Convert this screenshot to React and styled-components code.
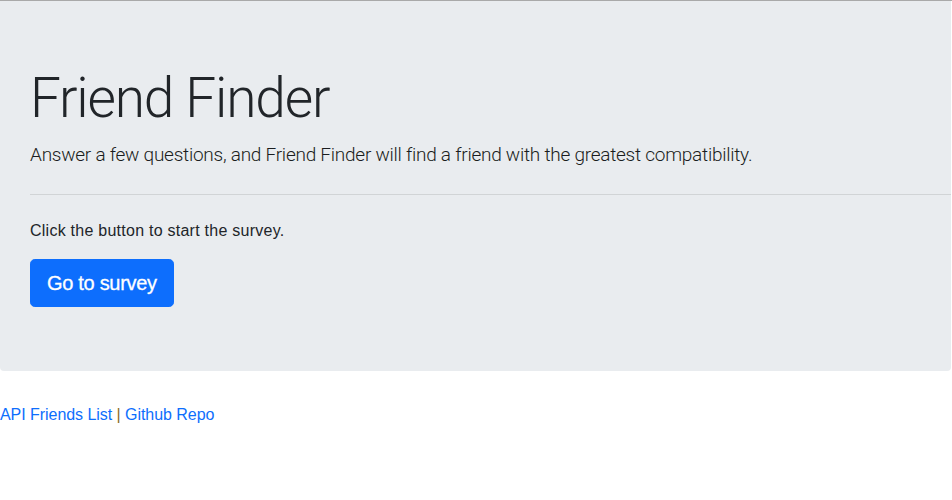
import React from 'react';
import styled, { createGlobalStyle } from 'styled-components';

const GlobalStyle = createGlobalStyle`
  * { box-sizing: border-box; }
  body {
    margin: 0;
    border-top: 1px solid #a9a9a9;
    background: #fff;
    color: #212529;
    font-family: "Liberation Sans", Arial, sans-serif;
    font-size: 16px;
    line-height: 1.5;
  }
`;

const Jumbotron = styled.div`
  width: 951px;
  padding: 64px 0 64px 30px;
  margin-bottom: 32px;
  background-color: #e9ecef;
  border-radius: 0 0 4px 4px;
`;

const Title = styled.h1`
  margin: 0 0 8px;
  font-family: Roboto, "Liberation Sans", sans-serif;
  font-size: 55px;
  font-weight: 300;
  line-height: 67px;
  letter-spacing: -1.2px;
`;

const Lead = styled.p`
  margin: 0 0 16px;
  font-family: Roboto, "Liberation Sans", sans-serif;
  font-size: 19px;
  font-weight: 300;
  line-height: 30px;
  letter-spacing: -0.25px;
  color: #1a1d20;
`;

const Rule = styled.hr`
  margin: 24px 0;
  border: 0;
  border-top: 1px solid rgba(0, 0, 0, 0.1);
`;

const Text = styled.p`
  margin: 0 0 16px;
  letter-spacing: 0.25px;
`;

const Button = styled.a`
  display: inline-block;
  padding: 8px 16px;
  font-size: 20px;
  line-height: 1.5;
  letter-spacing: -0.3px;
  color: #fff;
  background-color: #0d6efd;
  border: 1px solid #0d6efd;
  border-radius: 4.8px;
  text-decoration: none;
  -webkit-text-stroke: 0.3px #fff;
`;

const Footer = styled.div`
  line-height: 24px;
  letter-spacing: -0.05px;
`;

const Link = styled.a`
  color: #0d6efd;
  text-decoration: none;
`;

const Pipe = styled.span`
  color: #8a6a1c;
`;

export default function App() {
  return (
    <>
      <GlobalStyle />
      <Jumbotron>
        <Title>Friend Finder</Title>
        <Lead>Answer a few questions, and Friend Finder will find a friend with the greatest compatibility.</Lead>
        <Rule />
        <Text>Click the button to start the survey.</Text>
        <Button href="#survey">Go to survey</Button>
      </Jumbotron>
      <Footer>
        <Link href="#api">API Friends List</Link> <Pipe>|</Pipe> <Link href="#repo">Github Repo</Link>
      </Footer>
    </>
  );
}
